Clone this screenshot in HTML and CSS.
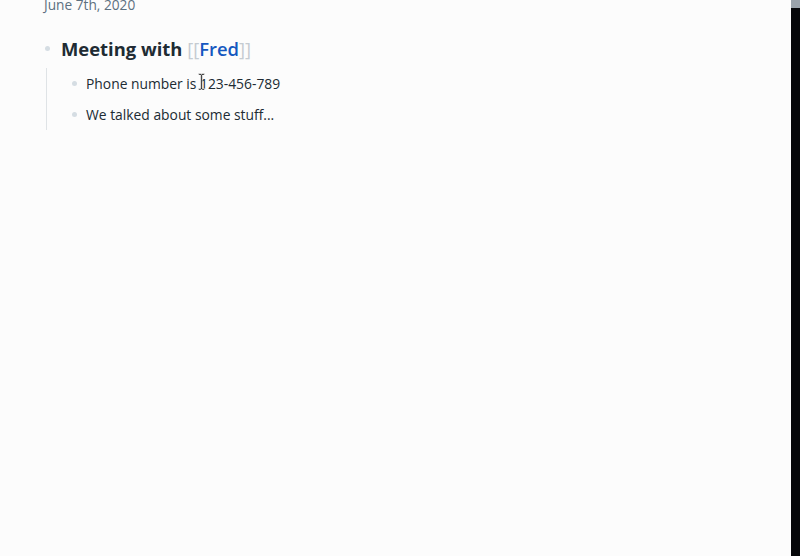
FILE: index.html
```html
<!DOCTYPE html>
<html>
<head>
<meta charset="utf-8">
<link rel="stylesheet" href="styles.css">
</head>
<body>
<div class="screen">
  <main class="page">
    <div class="date">June 7th, 2020</div>
    <div class="block">
      <div class="row top">
        <span class="dot"></span>
        <span class="heading">Meeting with <span class="br">[[</span><span class="link">Fred</span><span class="br">]]</span></span>
      </div>
      <div class="children">
        <div class="row child">
          <span class="dot small"></span>
          <span class="text">Phone number is <span class="cur-wrap">1<svg class="ibeam" width="7" height="18" viewBox="0 0 7 18"><path d="M0.5 0.5h2.5l0.5 1 0.5-1h2.5v1.5h-2.2v13.5h2.2v1.5h-2.5l-0.5-1-0.5 1h-2.5v-1.5h2.2v-13.5h-2.2z" fill="#111" stroke="#fff" stroke-width="0.6"/></svg></span>23-456-789</span>
        </div>
        <div class="row child">
          <span class="dot small"></span>
          <span class="text">We talked about some stuff...</span>
        </div>
      </div>
    </div>
  </main>
  <aside class="edge"><div class="edge-top"></div></aside>
</div>
</body>
</html>
```

FILE: styles.css
```css
* { box-sizing: border-box; }
html, body { margin: 0; padding: 0; }
body {
  font-family: "Open Sans", "Liberation Sans", sans-serif;
  background: #fcfcfc;
  width: 800px;
  height: 556px;
  overflow: hidden;
}
.screen {
  display: flex;
  width: 800px;
  height: 556px;
}
.page {
  flex: 1;
  padding: 0 0 0 44px;
  margin-top: -5px;
}
.date {
  font-size: 13.7px;
  line-height: 20px;
  color: #5c7080;
}
.block { margin-top: 19px; }
.row { display: flex; align-items: center; }
.top { height: 28px; }
.dot {
  width: 5px;
  height: 5px;
  border-radius: 50%;
  background: #d5dde3;
  margin-left: 1px;
  margin-right: 11px;
  flex: none;
}
.heading {
  font-size: 18.4px;
  font-weight: 700;
  color: #202b33;
}
.br { color: #c5cbd1; font-weight: 400; }
.link { color: #1558c0; font-weight: 600; }
.children {
  margin-top: 6px;
  margin-left: 2px;
  border-left: 1px solid #dfe3e6;
  padding: 0 0 0 24px;
}
.child { height: 31px; }
.dot.small {
  width: 5px;
  height: 5px;
  margin-left: 1px;
  margin-right: 9px;
}
.text {
  font-size: 13.85px;
  color: #202b33;
}
.cur-wrap { position: relative; }
.ibeam {
  position: absolute;
  left: -2px;
  top: -1px;
}
.edge {
  width: 9px;
  background: #06070a;
  flex: none;
}
.edge-top {
  height: 8px;
  background: #9aa3ab;
}
```
